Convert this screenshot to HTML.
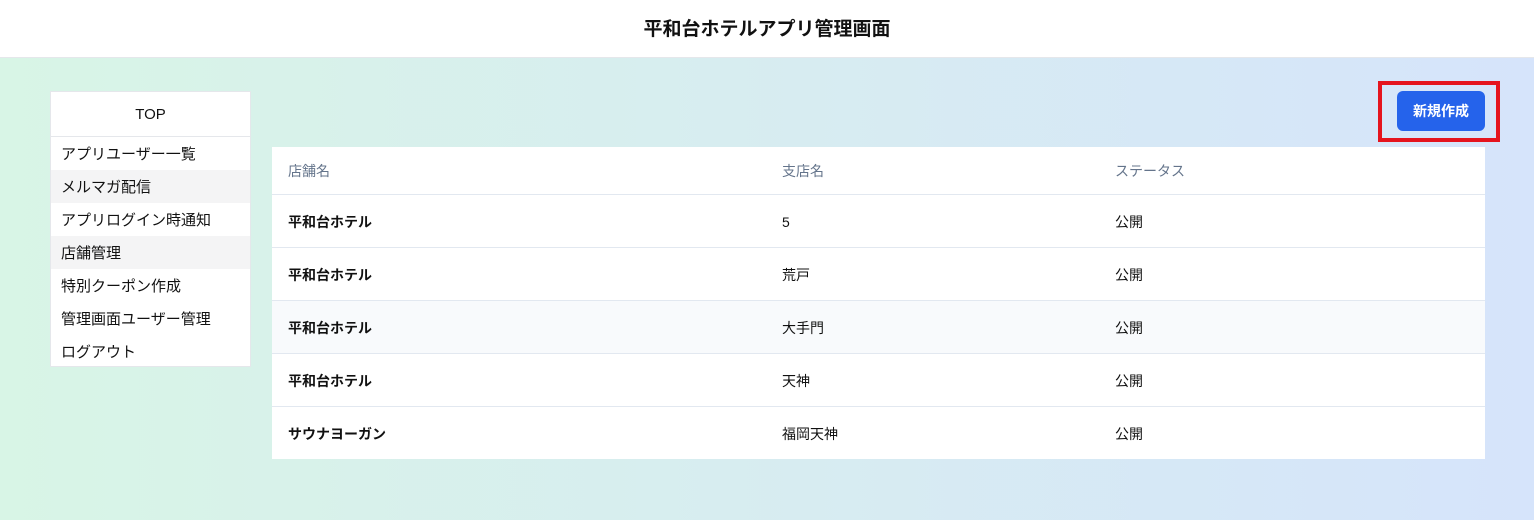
<!DOCTYPE html>
<html><head><meta charset="utf-8"><style>
*{margin:0;padding:0;box-sizing:border-box}
body{width:1534px;height:520px;overflow:hidden;font-family:"Liberation Sans","Noto Sans CJK JP",sans-serif;background:linear-gradient(90deg,#d8f5e6,#d6e4fb)}
.hdr{height:58px;background:#fff;text-align:center;font-size:19px;font-weight:bold;line-height:60px;color:#111;border-bottom:1px solid #e5e7eb}
.side{position:absolute;left:50px;top:91px;width:201px;height:276px;background:#fff;border:1px solid #e5e7eb}
.side .top{height:45px;line-height:46px;text-align:center;font-size:15px;border-bottom:1px solid #e5e7eb;color:#111}
.side .it{height:33px;line-height:35px;padding-left:10px;font-size:15px;color:#111}
.side .g{background:#f4f4f5}
.btnbox{position:absolute;left:1378px;top:81px;width:122px;height:61px;border:4px solid #e5141e}
.btn{position:absolute;left:1397px;top:91px;width:88px;height:40px;background:#2563eb;border-radius:6px;color:#fff;font-size:14px;font-weight:bold;text-align:center;line-height:40px}
table{position:absolute;left:272px;top:147px;width:1213px;border-collapse:collapse;background:#fff;font-size:14px}
th{height:47px;text-align:left;font-weight:normal;color:#64748b;border-bottom:1px solid #e2e8f0;padding-top:1px}
td{height:53px;color:#111;border-bottom:1px solid #e2e8f0;padding-top:2px}
tr:last-child td{border-bottom:none}
td:first-child{font-weight:bold}
th:nth-child(1),td:nth-child(1){padding-left:16px;width:510px}
th:nth-child(2),td:nth-child(2){width:333px}
tr.alt td{background:#f8fafc}
</style></head><body>
<div class="hdr">平和台ホテルアプリ管理画面</div>
<div class="side"><div class="top">TOP</div>
<div class="it">アプリユーザー一覧</div><div class="it g">メルマガ配信</div><div class="it">アプリログイン時通知</div><div class="it g">店舗管理</div><div class="it">特別クーポン作成</div><div class="it">管理画面ユーザー管理</div><div class="it">ログアウト</div></div>
<div class="btnbox"></div><div class="btn">新規作成</div>
<table><tr><th>店舗名</th><th>支店名</th><th>ステータス</th></tr>
<tr><td>平和台ホテル</td><td>5</td><td>公開</td></tr>
<tr><td>平和台ホテル</td><td>荒戸</td><td>公開</td></tr>
<tr class="alt"><td>平和台ホテル</td><td>大手門</td><td>公開</td></tr>
<tr><td>平和台ホテル</td><td>天神</td><td>公開</td></tr>
<tr><td>サウナヨーガン</td><td>福岡天神</td><td>公開</td></tr>
</table>
</body></html>
